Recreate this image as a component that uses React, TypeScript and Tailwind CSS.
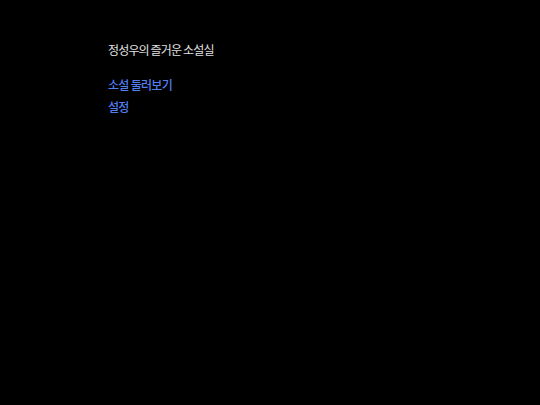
export default function App() {
  return (
    <div className="w-[540px] h-[405px] bg-black" style={{ fontFamily: '"Noto Sans CJK KR", "Noto Sans", sans-serif' }}>
      <div className="pl-[108px] pt-[41px]">
        <h1 className="text-[12px] leading-[18px] tracking-[-0.85px] text-[#e0e0e0] font-normal">정성우의 즐거운 소설실</h1>
        <ul className="mt-[14px] flex flex-col">
          <li className="leading-[20px]"><a href="#" className="text-[12px] leading-[20px] tracking-[-0.7px] text-[#527ef0] font-medium">소설 둘러보기</a></li>
          <li className="leading-[20px]"><a href="#" className="text-[12px] leading-[20px] tracking-[-0.7px] text-[#527ef0] font-medium">설정</a></li>
        </ul>
      </div>
    </div>
  );
}
